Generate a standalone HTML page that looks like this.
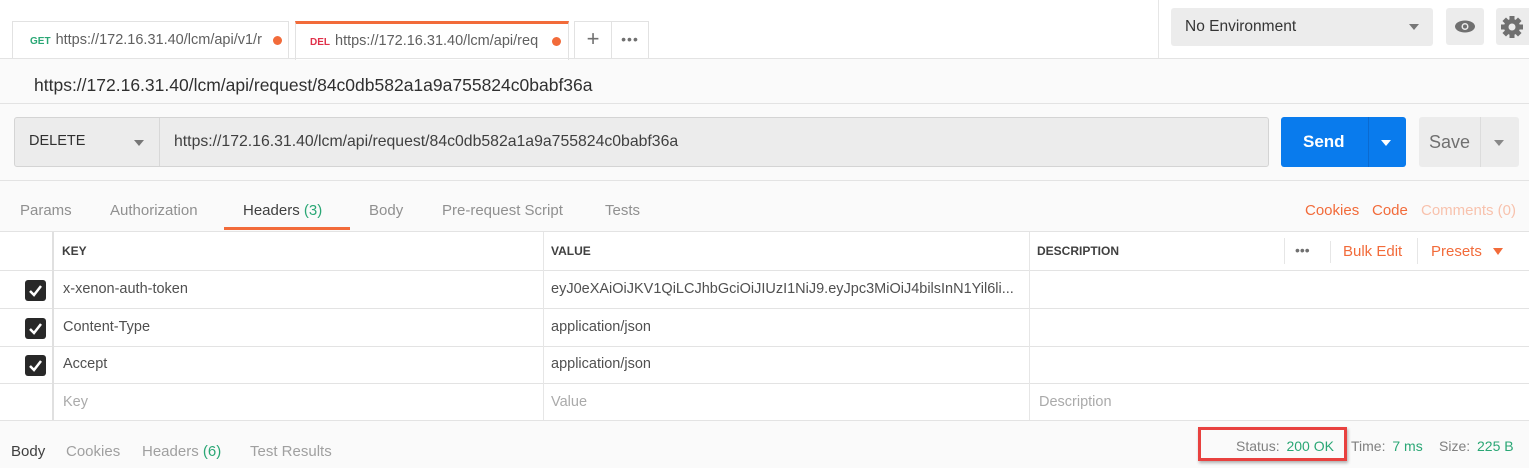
<!DOCTYPE html>
<html><head><meta charset="utf-8"><style>
*{box-sizing:border-box;margin:0;padding:0}
body{width:1529px;height:468px;overflow:hidden;background:#fafafa;font-family:"Liberation Sans",sans-serif;position:relative;color:#505050}
.a{position:absolute;white-space:nowrap}
.tab{position:absolute;top:21px;height:38px;background:#fff;border:1px solid #e2e2e2;border-bottom:none;font-size:14.5px;color:#606060;line-height:36px}
.dot{display:inline-block;width:9px;height:9px;border-radius:50%;background:#f26b3a;position:absolute;top:14px}
.hl{position:absolute;left:0;width:1529px;height:1px;background:#e3e3e3}
.vl{position:absolute;width:1px;background:#e6e6e6}
.cb{position:absolute;left:25px;width:21px;height:21px;background:#282828;border-radius:3px}
.cell{position:absolute;font-size:14.5px;color:#505050}
.ph{color:#aaa}
</style></head><body>
<div class="a" style="left:0;top:0;width:1529px;height:58px;background:#fff"></div>
<div class="tab" style="left:12px;width:277px;overflow:hidden"><span style="color:#2aa775;font-size:10px;font-weight:bold;margin-left:17px">GET</span><span style="margin-left:5px">https://172.16.31.40/lcm/api/v1/r</span><span class="dot" style="left:260px"></span></div>
<div class="tab" style="left:295px;width:274px;border-top:3px solid #f26b3a;height:39px;line-height:34px;overflow:hidden"><span style="color:#e0304a;font-size:10px;font-weight:bold;margin-left:14px">DEL</span><span style="margin-left:5px">https://172.16.31.40/lcm/api/req</span><span class="dot" style="left:256px;top:13px"></span></div>
<div class="tab" style="left:574px;width:38px;text-align:center;font-size:22px;line-height:34px;color:#707070">+</div>
<div class="tab" style="left:611px;width:38px;text-align:center;font-size:14px;letter-spacing:1px;color:#707070;line-height:34px">•••</div>
<div class="vl" style="left:1158px;top:0;height:58px"></div>
<div class="a" style="left:1171px;top:8px;width:262px;height:38px;background:#ececec;border-radius:3px;font-size:15.5px;color:#353535;line-height:38px;padding-left:14px">No Environment<span style="position:absolute;left:238px;top:16px;border:5px solid transparent;border-top:6px solid #777;border-bottom:none"></span></div>
<div class="a" style="left:1446px;top:8px;width:38px;height:37px;background:#ececec;border-radius:3px">
<svg width="38" height="37"><ellipse cx="19" cy="18.5" rx="10" ry="6" fill="#707070"/><circle cx="19" cy="18.5" r="3.5" fill="#ececec"/><circle cx="19" cy="18.5" r="2" fill="#707070"/></svg></div>
<div class="a" style="left:1496px;top:8px;width:40px;height:37px;background:#ececec;border-radius:3px">
<svg width="33" height="37"><g transform="translate(16,19)" fill="#707070"><circle r="8"/><rect x="-2.5" y="-11" width="5" height="22"/><rect x="-2.5" y="-11" width="5" height="22" transform="rotate(45)"/><rect x="-2.5" y="-11" width="5" height="22" transform="rotate(90)"/><rect x="-2.5" y="-11" width="5" height="22" transform="rotate(135)"/><circle r="3.5" fill="#ececec"/></g></svg></div>
<div class="hl" style="top:58px"></div>
<div class="a" style="left:34px;top:75px;font-size:17.5px;color:#303030">https://172.16.31.40/lcm/api/request/84c0db582a1a9a755824c0babf36a</div>
<div class="hl" style="top:103px"></div>
<div class="a" style="left:14px;top:117px;width:1255px;height:50px;background:#ececec;border:1px solid #d4d4d4;border-radius:3px"></div>
<div class="vl" style="left:159px;top:118px;height:48px;background:#d8d8d8"></div>
<div class="a" style="left:29px;top:133px;font-size:14.5px;color:#303030">DELETE</div>
<div class="a" style="left:134px;top:140px;border:5px solid transparent;border-top:6px solid #777;border-bottom:none"></div>
<div class="a" style="left:174px;top:133px;font-size:15.8px;color:#404040">https://172.16.31.40/lcm/api/request/84c0db582a1a9a755824c0babf36a</div>
<div class="a" style="left:1281px;top:117px;width:125px;height:50px;background:#097bed;border-radius:3px"></div>
<div class="a" style="left:1368px;top:117px;width:1px;height:50px;background:#0a6ad0"></div>
<div class="a" style="left:1303px;top:132px;font-size:17px;font-weight:bold;color:#fff">Send</div>
<div class="a" style="left:1381px;top:140px;border:5px solid transparent;border-top:6px solid #fff;border-bottom:none"></div>
<div class="a" style="left:1419px;top:117px;width:100px;height:50px;background:#ececec;border-radius:3px"></div>
<div class="a" style="left:1480px;top:117px;width:1px;height:50px;background:#dcdcdc"></div>
<div class="a" style="left:1429px;top:132px;font-size:18px;color:#707070">Save</div>
<div class="a" style="left:1494px;top:140px;border:5px solid transparent;border-top:6px solid #888;border-bottom:none"></div>
<div class="hl" style="top:180px"></div>
<div class="a" style="top:202px;left:20px;font-size:15px;color:#909090">Params</div>
<div class="a" style="top:202px;left:110px;font-size:15px;color:#909090">Authorization</div>
<div class="a" style="top:202px;left:243px;font-size:15px;color:#404040">Headers <span style="color:#2aa775">(3)</span></div>
<div class="a" style="left:224px;top:227px;width:126px;height:3px;background:#f26b3a"></div>
<div class="a" style="top:202px;left:369px;font-size:15px;color:#909090">Body</div>
<div class="a" style="top:202px;left:442px;font-size:15px;color:#909090">Pre-request Script</div>
<div class="a" style="top:202px;left:605px;font-size:15px;color:#909090">Tests</div>
<div class="a" style="top:202px;left:1305px;font-size:15px;color:#f26b3a">Cookies</div>
<div class="a" style="top:202px;left:1372px;font-size:15px;color:#f26b3a">Code</div>
<div class="a" style="top:202px;left:1421px;font-size:15px;color:#f8c2ad">Comments (0)</div>
<div class="a" style="left:0;top:231px;width:1529px;height:190px;background:#fff;border-top:1px solid #e3e3e3"></div>
<div class="hl" style="top:270px"></div><div class="hl" style="top:308px"></div><div class="hl" style="top:346px"></div><div class="hl" style="top:383px"></div><div class="hl" style="top:420px"></div>
<div class="vl" style="left:52px;top:232px;height:188px;background:#e0e0e0;width:2px"></div>
<div class="vl" style="left:543px;top:232px;height:188px"></div>
<div class="vl" style="left:1029px;top:232px;height:188px"></div>
<div class="vl" style="left:1284px;top:238px;height:26px"></div>
<div class="vl" style="left:1330px;top:241px;height:22px"></div>
<div class="vl" style="left:1417px;top:238px;height:26px"></div>
<div class="a" style="left:62px;top:244px;font-size:12px;font-weight:bold;color:#404040">KEY</div>
<div class="a" style="left:551px;top:244px;font-size:12px;font-weight:bold;color:#404040">VALUE</div>
<div class="a" style="left:1037px;top:244px;font-size:12px;font-weight:bold;color:#404040">DESCRIPTION</div>
<div class="a" style="left:1295px;top:242px;font-size:14px;color:#707070;letter-spacing:0">•••</div>
<div class="a" style="left:1343px;top:243px;font-size:15px;color:#f26b3a">Bulk Edit</div>
<div class="a" style="left:1431px;top:243px;font-size:15px;color:#f26b3a">Presets</div>
<div class="a" style="left:1493px;top:248px;border:5px solid transparent;border-top:7px solid #f26b3a;border-bottom:none"></div>
<div class="cb" style="top:280px"><svg width="21" height="21"><path d="M5 11 L9 15 L16 6" stroke="#fff" stroke-width="2.5" fill="none"/></svg></div>
<div class="cb" style="top:318px"><svg width="21" height="21"><path d="M5 11 L9 15 L16 6" stroke="#fff" stroke-width="2.5" fill="none"/></svg></div>
<div class="cb" style="top:355px"><svg width="21" height="21"><path d="M5 11 L9 15 L16 6" stroke="#fff" stroke-width="2.5" fill="none"/></svg></div>
<div class="cell" style="left:63px;top:281px">x-xenon-auth-token</div>
<div class="cell" style="left:551px;top:281px">eyJ0eXAiOiJKV1QiLCJhbGciOiJIUzI1NiJ9.eyJpc3MiOiJ4bilsInN1Yil6li...</div>
<div class="cell" style="left:63px;top:319px">Content-Type</div>
<div class="cell" style="left:551px;top:319px">application/json</div>
<div class="cell" style="left:63px;top:356px">Accept</div>
<div class="cell" style="left:551px;top:356px">application/json</div>
<div class="cell ph" style="left:63px;top:394px">Key</div>
<div class="cell ph" style="left:551px;top:394px">Value</div>
<div class="cell ph" style="left:1039px;top:394px">Description</div>
<div class="a" style="left:11px;top:443px;font-size:15px;color:#404040">Body</div>
<div class="a" style="left:66px;top:443px;font-size:15px;color:#a0a0a0">Cookies</div>
<div class="a" style="left:142px;top:443px;font-size:15px;color:#a0a0a0">Headers <span style="color:#2aa775">(6)</span></div>
<div class="a" style="left:250px;top:443px;font-size:15px;color:#a0a0a0">Test Results</div>
<div class="a" style="left:1198px;top:427px;width:149px;height:34px;border:3px solid #e8413f;box-shadow:1px 2px 3px rgba(0,0,0,.3)"></div>
<div class="a" style="left:1236px;top:438px;font-size:14px;color:#808080">Status: <span style="color:#2aa775;margin-left:3px">200 OK</span></div>
<div class="a" style="left:1351px;top:438px;font-size:14px;color:#808080">Time: <span style="color:#2aa775;margin-left:3px">7 ms</span></div>
<div class="a" style="left:1439px;top:438px;font-size:14px;color:#808080">Size: <span style="color:#2aa775;margin-left:3px">225 B</span></div>
</body></html>
